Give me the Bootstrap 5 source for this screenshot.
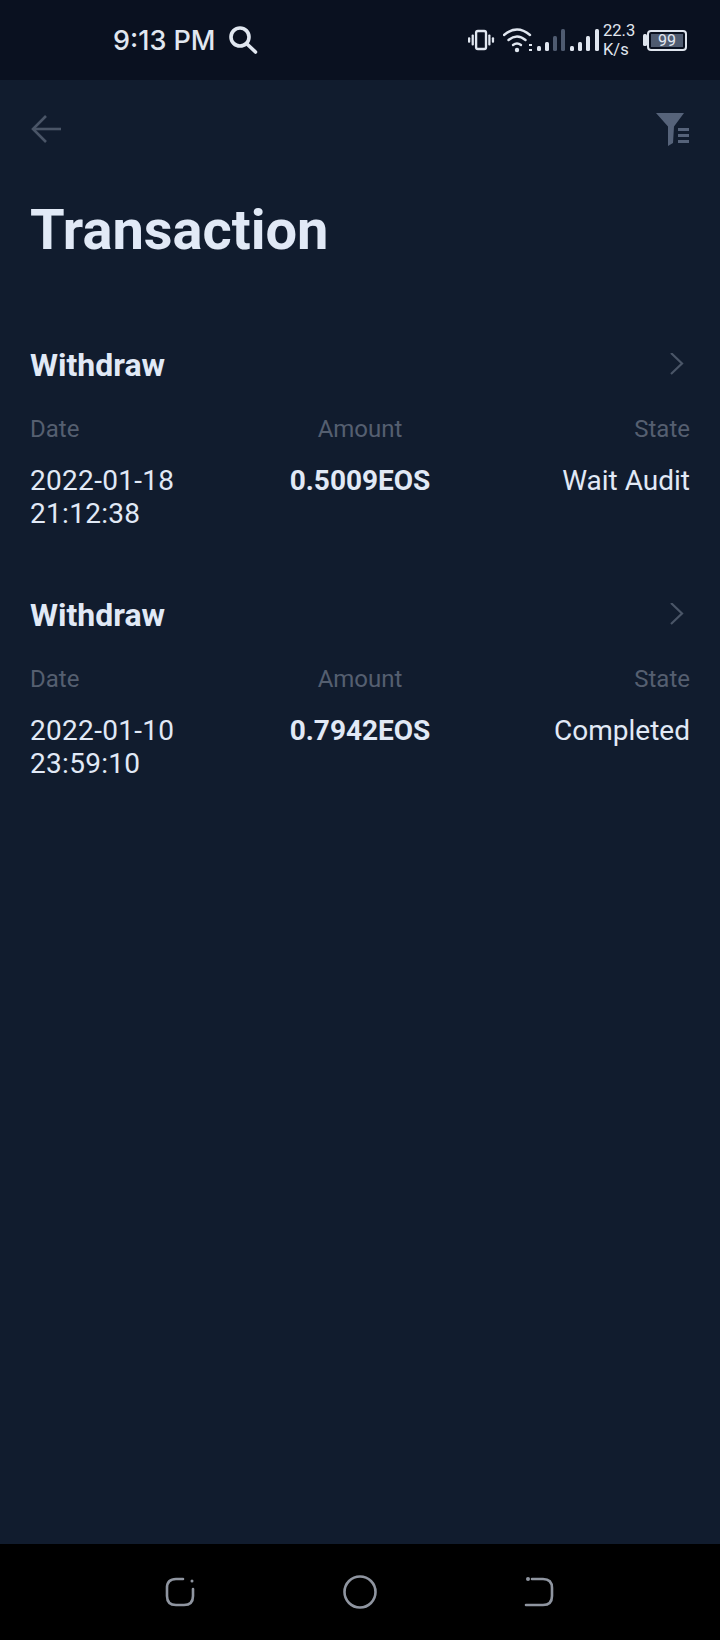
<!DOCTYPE html>
<html lang="en">

<head>
  <meta charset="UTF-8">
  <meta name="viewport" content="width=device-width, initial-scale=1.0">
  <title>Transaction</title>
  <link href="https://cdn.jsdelivr.net/npm/bootstrap@5.3.0/dist/css/bootstrap.min.css" rel="stylesheet">
  <script src="https://cdn.jsdelivr.net/npm/bootstrap@5.3.0/dist/js/bootstrap.bundle.min.js"></script>
  <style>
    body { background: #111c2e; font-family: Roboto, "Liberation Sans", sans-serif; color: #e1e9f6; }
    .screen { height: 1640px; width: 720px; overflow: hidden; }
    .status-bar { height: 80px; background: #0a1120; padding: 0 33px 0 113px; color: #e1e7f0; }
    .status-time { font-family: Inter, Roboto, sans-serif; font-size: 27px; font-weight: 500; line-height: 1; margin-right: 12px; }
    .status-speed { font-size: 16.500px; line-height: 19px; width: 33px; margin: 0 7px 0 2px; }
    .battery-box { width: 40px; height: 21px; border: 2px solid #dfe5ee; border-radius: 4px; padding: 2px; }
    .battery-fill { background: #4f5b70; height: 100%; font-size: 16px; line-height: 13px; text-align: center; }
    .top-row { padding: 33px 30px 0 31px; height: 117px; }
    .page-title { font-size: 56px; font-weight: 700; line-height: 66px; margin: 0 0 0 30px; color: #e1e9f6; }
    .tx-list { padding: 0 30px 0 30px; margin-top: 83px; }
    .tx-item { height: 250px; }
    .tx-type { font-size: 32px; font-weight: 700; line-height: 38px; }
    .tx-label { font-size: 24px; line-height: 28px; color: #555f70; margin-top: 31px; }
    .tx-value { font-size: 28px; line-height: 32.5px; margin-top: 22px; color: #e1e9f6; }
    .tx-date { letter-spacing: 0.300px; }
    .tx-amount { font-weight: 700; font-size: 28px; }
    .nav-keys { height: 96px; background: #000; padding: 0 166px 0 165px; margin-top: auto; }
  </style>
</head>

<body>
  <div class="screen d-flex flex-column">

    <!-- status bar -->
    <div class="status-bar d-flex align-items-center">
      <span class="status-time">9:13 PM</span>
      <svg width="30" height="30" viewBox="0 0 30 30" fill="none" stroke="#e1e7f0" stroke-width="3.600" stroke-linecap="round">
        <circle cx="12" cy="12" r="9"/><path d="M19 19l8.500 8"/>
      </svg>
      <div class="d-flex align-items-center ms-auto">
        <svg width="27" height="24" viewBox="0 0 30 24" fill="#e1e7f0" class="me-2">
          <rect x="9" y="2" width="11" height="20" rx="2" fill="none" stroke="#e1e7f0" stroke-width="2.600"/>
          <rect x="0" y="9" width="2.500" height="6" rx="1"/><rect x="4" y="6" width="2.500" height="12" rx="1"/>
          <rect x="22.500" y="6" width="2.500" height="12" rx="1"/><rect x="26.500" y="9" width="2.500" height="6" rx="1"/>
        </svg>
        <svg width="98" height="26" viewBox="0 0 98 26" fill="#e1e7f0">
          <g fill="none" stroke="#e1e7f0" stroke-width="2.400" stroke-linecap="round">
            <path d="M1 8q13-11 26 0"/><path d="M5.500 13q8.500-7 17 0"/><path d="M10 18q4-3 8 0"/>
          </g>
          <circle cx="14" cy="23" r="2.200"/>
          <rect x="26" y="17" width="3" height="2"/><rect x="26" y="22" width="3" height="2"/>
          <rect x="34" y="19" width="4" height="5" rx="1.500"/><rect x="42" y="15" width="4" height="9" rx="1.500"/>
          <rect x="50" y="9" width="4" height="15" rx="1.500" fill="#4f5b70"/><rect x="58" y="2" width="4" height="22" rx="1.500" fill="#4f5b70"/>
          <rect x="67" y="19" width="4" height="5" rx="1.500"/><rect x="75" y="15" width="4" height="9" rx="1.500"/>
          <rect x="83" y="9" width="4" height="15" rx="1.500"/><rect x="92" y="2" width="4" height="22" rx="1.500"/>
        </svg>
        <div class="status-speed">22.3<br>K/s</div>
        <svg width="4" height="12" viewBox="0 0 4 12" fill="#dfe5ee"><rect width="4" height="12" rx="1.500"/></svg>
        <div class="battery-box"><div class="battery-fill">99</div></div>
      </div>
    </div>

    <!-- back and filter -->
    <div class="top-row d-flex justify-content-between align-items-start">
      <svg width="30" height="32" viewBox="0 0 30 32" fill="none" stroke="#4a5567" stroke-width="2.600">
        <path d="M30 16H2"/><path d="M15 3L2 16 15 29"/>
      </svg>
      <svg width="34" height="34" viewBox="0 0 34 34" fill="#56637a">
        <path d="M0 0h28L18 13.500 17 30l-5 3V13.500z"/>
        <rect x="22" y="15" width="11" height="3"/><rect x="22" y="21" width="11" height="3"/><rect x="22" y="27" width="11" height="3"/>
      </svg>
    </div>

    <h1 class="page-title">Transaction</h1>

    <div class="tx-list">
      <div class="tx-item">
        <div class="d-flex justify-content-between align-items-center">
          <div class="tx-type">Withdraw</div>
          <svg width="20" height="24" viewBox="0 0 20 24" fill="none" stroke="#4a5567" stroke-width="2.200"><path d="M1 0l11 10.500L1 21"/></svg>
        </div>
        <div class="row g-0 tx-label">
          <div class="col-4">Date</div>
          <div class="col-4 text-center">Amount</div>
          <div class="col-4 text-end">State</div>
        </div>
        <div class="row g-0 tx-value">
          <div class="col-4 tx-date">2022-01-18 21:12:38</div>
          <div class="col-4 text-center tx-amount">0.5009EOS</div>
          <div class="col-4 text-end">Wait Audit</div>
        </div>
      </div>
      <div class="tx-item">
        <div class="d-flex justify-content-between align-items-center">
          <div class="tx-type">Withdraw</div>
          <svg width="20" height="24" viewBox="0 0 20 24" fill="none" stroke="#4a5567" stroke-width="2.200"><path d="M1 0l11 10.500L1 21"/></svg>
        </div>
        <div class="row g-0 tx-label">
          <div class="col-4">Date</div>
          <div class="col-4 text-center">Amount</div>
          <div class="col-4 text-end">State</div>
        </div>
        <div class="row g-0 tx-value">
          <div class="col-4 tx-date">2022-01-10 23:59:10</div>
          <div class="col-4 text-center tx-amount">0.7942EOS</div>
          <div class="col-4 text-end">Completed</div>
        </div>
      </div>
    </div>

    <!-- android keys -->
    <div class="nav-keys d-flex justify-content-between align-items-center">
      <svg width="30" height="30" viewBox="0 0 30 30" fill="none" stroke="#8f95a0" stroke-width="2.600" stroke-linecap="round">
        <path d="M18 2H11Q2 2 2 11v8q0 9 9 9h8q9 0 9-9v-7"/>
        <circle cx="27" cy="4" r="1.500" fill="#8f95a0" stroke="none"/>
      </svg>
      <svg width="34" height="34" viewBox="0 0 34 34" fill="none" stroke="#8f95a0" stroke-width="2.600"><circle cx="17" cy="17" r="15.500"/></svg>
      <svg width="30" height="30" viewBox="0 0 30 30" fill="none" stroke="#8f95a0" stroke-width="2.600" stroke-linecap="round">
        <path d="M8 2h11q9 0 9 9v8q0 9-9 9H2"/>
        <circle cx="4" cy="2" r="2" fill="#8f95a0" stroke="none"/>
      </svg>
    </div>

  </div>
</body>

</html>
